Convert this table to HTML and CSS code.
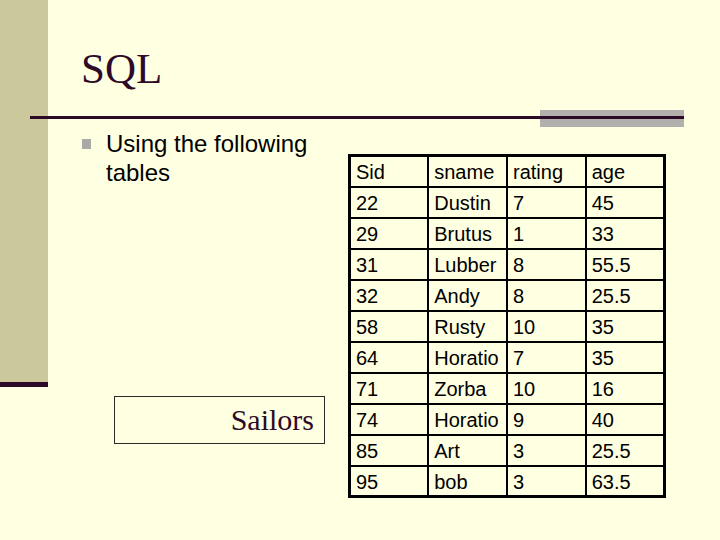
FILE: index.html
```html
<!DOCTYPE html>
<html>
<head>
<meta charset="utf-8">
<link rel="stylesheet" href="styles.css">
</head>
<body>
<div class="slide">
  <div class="side">
    <div class="side-fill"></div>
    <div class="side-foot"></div>
  </div>
  <h1 class="title">SQL</h1>
  <div class="rulebar"></div>
  <div class="content">
    <div class="left">
      <div class="bullet-item">
        <span class="bullet"></span>
        <span class="bullet-text">Using the following tables</span>
      </div>
      <div class="caption">Sailors</div>
    </div>
    <table class="data">
      <tr><td>Sid</td><td>sname</td><td>rating</td><td>age</td></tr>
      <tr><td>22</td><td>Dustin</td><td>7</td><td>45</td></tr>
      <tr><td>29</td><td>Brutus</td><td>1</td><td>33</td></tr>
      <tr><td>31</td><td>Lubber</td><td>8</td><td>55.5</td></tr>
      <tr><td>32</td><td>Andy</td><td>8</td><td>25.5</td></tr>
      <tr><td>58</td><td>Rusty</td><td>10</td><td>35</td></tr>
      <tr><td>64</td><td>Horatio</td><td>7</td><td>35</td></tr>
      <tr><td>71</td><td>Zorba</td><td>10</td><td>16</td></tr>
      <tr><td>74</td><td>Horatio</td><td>9</td><td>40</td></tr>
      <tr><td>85</td><td>Art</td><td>3</td><td>25.5</td></tr>
      <tr><td>95</td><td>bob</td><td>3</td><td>63.5</td></tr>
    </table>
  </div>
</div>
</body>
</html>
```

FILE: styles.css
```css
html, body {
  margin: 0;
  padding: 0;
  background: #ffffe1;
}

.slide {
  width: 720px;
  height: 540px;
  display: grid;
  grid-template-columns: 48px 1fr;
  grid-template-rows: 110px 17px 1fr;
  background: #ffffe1;
  overflow: hidden;
}

.side {
  grid-column: 1;
  grid-row: 1 / 4;
  display: flex;
  flex-direction: column;
}

.side-fill {
  height: 382px;
  background: #cbc99b;
}

.side-foot {
  height: 5px;
  background: #2d0a28;
}

.title {
  grid-column: 2;
  grid-row: 1;
  margin: 0;
  padding: 47px 0 0 33px;
  font-family: "Liberation Serif", serif;
  font-weight: normal;
  font-size: 43px;
  line-height: 43px;
  color: #2d0a28;
}

.rulebar {
  grid-column: 1 / 3;
  grid-row: 2;
  margin: 0 36px 0 30px;
  background:
    linear-gradient(#2d0a28, #2d0a28) 0 6px / 100% 3px no-repeat,
    linear-gradient(#b1b0ac, #b1b0ac) right 0 top 0 / 144px 17px no-repeat;
}

.content {
  grid-column: 2;
  grid-row: 3;
  display: flex;
  align-items: flex-start;
  padding: 2px 0 0 34px;
}

.left {
  width: 266px;
  display: flex;
  flex-direction: column;
}

.bullet-item {
  display: flex;
  align-items: flex-start;
  gap: 15px;
}

.bullet {
  flex: none;
  width: 9px;
  height: 10px;
  margin-top: 10px;
  background: #a9a9a5;
}

.bullet-text {
  font-family: "Liberation Sans", Arial, sans-serif;
  font-size: 24px;
  line-height: 29px;
  color: #000;
}

.caption {
  margin: 209px 0 0 32px;
  width: 199px;
  height: 44px;
  border: 1px solid #2a2a2a;
  padding: 2px 10px 0 0;
  box-sizing: content-box;
  text-align: right;
  font-family: "Liberation Serif", serif;
  font-size: 30px;
  line-height: 42px;
  color: #2d0a28;
}

.data {
  margin-top: 25px;
  width: 318px;
  table-layout: fixed;
  border-collapse: collapse;
  border: 3px solid #000;
  font-family: "Liberation Sans", Arial, sans-serif;
  font-size: 20px;
  color: #000;
}

.data td {
  width: 25%;
  height: 31px;
  padding: 2px 5px 0 5px;
  border: 2px solid #000;
  line-height: 22px;
  vertical-align: middle;
  white-space: nowrap;
  box-sizing: border-box;
}
```
